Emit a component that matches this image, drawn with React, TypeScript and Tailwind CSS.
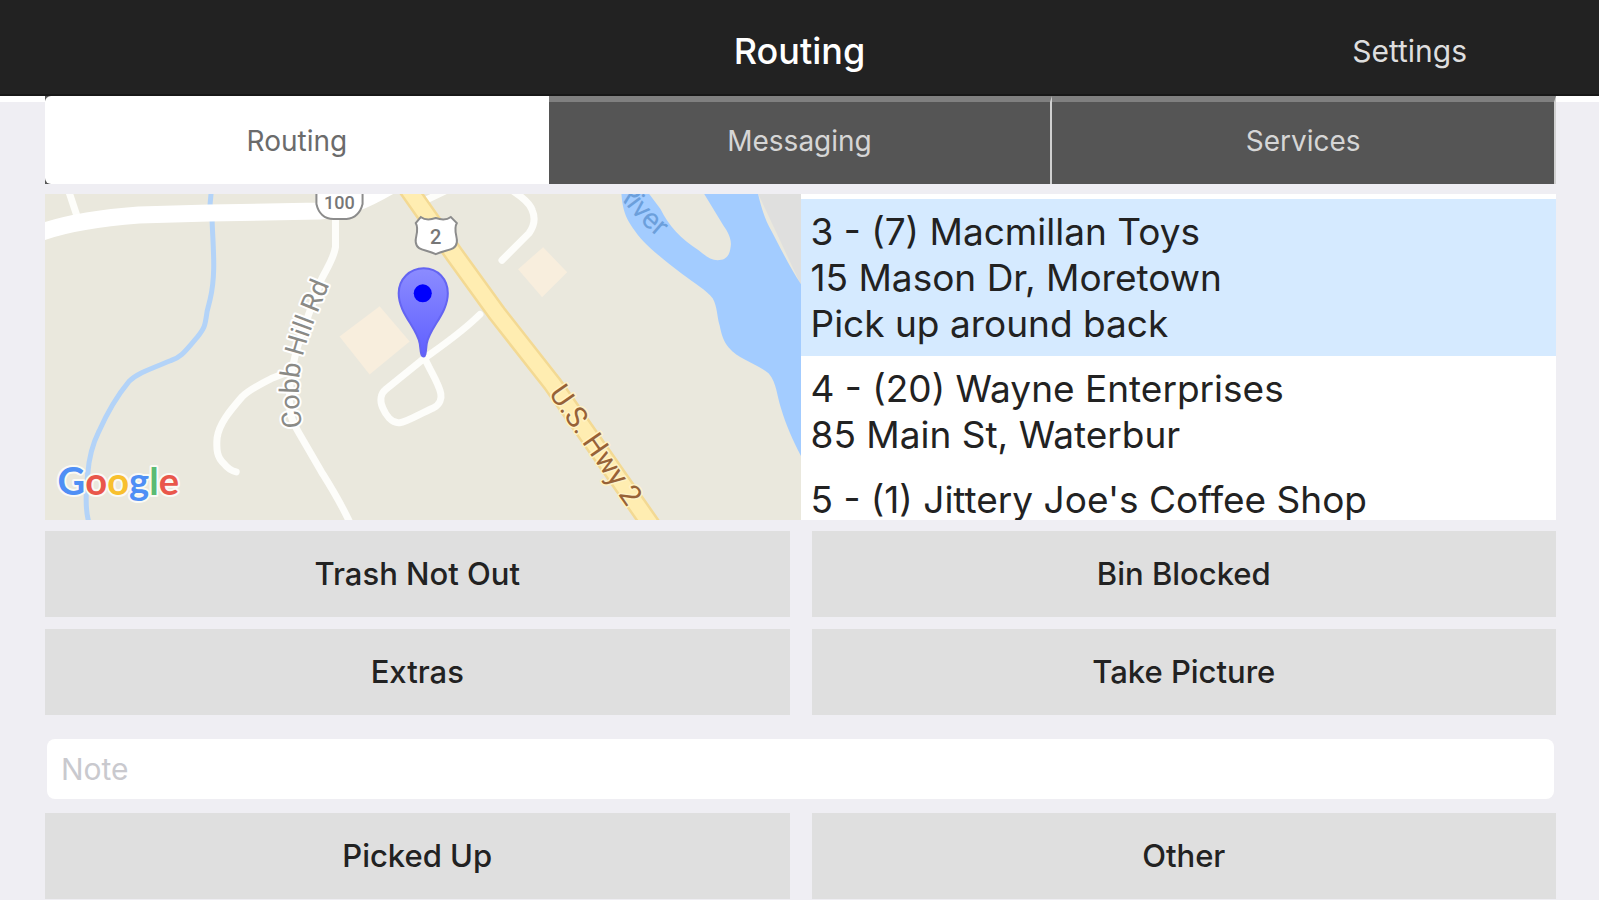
import { useState } from "react";

const tabs = ["Routing", "Messaging", "Services"];

const stops = [
  {
    id: 3,
    lines: ["3 - (7) Macmillan Toys", "15 Mason Dr, Moretown", "Pick up around back"],
  },
  {
    id: 4,
    lines: ["4 - (20) Wayne Enterprises", "85 Main St, Waterbur"],
  },
  {
    id: 5,
    lines: ["5 - (1) Jittery Joe's Coffee Shop"],
  },
];

/* ------------------------------ MAP ------------------------------ */

function RouteMap() {
  return (
    <svg
      viewBox="45 195 756 325"
      preserveAspectRatio="xMidYMid slice"
      className="block h-full w-full bg-[#eae8dd]"
      role="img"
      aria-label="Route map"
    >
      <defs>
        <linearGradient id="pin" x1="0" y1="0" x2="0" y2="1">
          <stop offset="0" stopColor="#8c8cff" />
          <stop offset="1" stopColor="#5f5fff" />
        </linearGradient>
        <path id="cobb-hill" d="M303 427 C299 405 298 385 302 365 C306 340 318 315 336 270" />
        <path id="hwy-2" d="M548 394 L645 534" />
        <path id="river" d="M617 190 C624 208 640 226 680 256" />
      </defs>

      {/* Buildings */}
      <g fill="#f8eedd">
        <path d="M543 248 L567 273 L542 298 L518 270 Z" />
        <path d="M380 307 L410 342 L370 375 L340 337 Z" />
      </g>

      {/* River */}
      <path d="M757 194 H802 V290 Z" fill="#dfdfde" />
      <path
        d="M621 194 C622 208 624 214 628 222 C634 232 640 240 650 249 C660 258 670 266 682 275 C694 284 706 291 712 299 C717 308 716 316 719 326 C721 336 723 342 728 348 C738 360 756 364 768 374 C776 384 776 396 780 408 C786 428 792 440 802 460 V288 C790 270 778 246 768 227 C762 214 760 206 757 194 H703 L723 227 C728 234 731 241 730 247 C729 257 725 261 717 261 C710 261 704 256 698 251 C680 240 668 226 660 210 L648 194 Z"
        fill="#a3ccff"
      />
      <path
        d="M212 194 L211 205 L213 222 C214 250 217 275 211 300 L208 312 C206 326 206 328 198 338 C186 352 182 358 172 361 C150 370 138 374 130 382 C120 394 108 414 100 432 C92 448 90 462 89 474 C87 492 86 508 90 522"
        fill="none"
        stroke="#b3d3f8"
        strokeWidth="5"
      />

      {/* Local roads */}
      <g fill="none" stroke="#fdfdfa" strokeWidth="7" strokeLinecap="round" strokeLinejoin="round">
        <path d="M70 192 L78 216" />
        <path d="M336 215 V248 C334 260 328 268 322 280 L302 335 C294 358 290 380 290 400 C290 416 294 424 300 434 L322 472 C332 488 341 502 351 524" />
        <path d="M290 372 L272 379 C260 385 250 390 243 397 C230 412 220 424 218 438 C217 450 218 458 225 464 C229 469 232 471 237 472" />
        <path d="M480 315 C462 333 444 345 423 360 L386 390 C381 394 380 401 383 408 C386 415 392 424 400 423 C408 422 420 414 434 408 C440 405 442 399 441 394 C439 384 432 374 426 361" />
        <path d="M513 192 C522 198 530 204 532 211 C536 220 534 227 529 234 L502 261" />
        <path d="M420 204 L445 192" />
      </g>
      <path
        d="M38 235 C66 224 100 219 140 216 L210 214 L320 212 C345 210 365 202 392 186"
        fill="none"
        stroke="#fff"
        strokeWidth="17"
      />

      {/* Highway */}
      <g fill="none" strokeLinejoin="round">
        <path d="M405 185 L455 256 L497 314 L552 384 L654 530" stroke="#f3d993" strokeWidth="20" />
        <path d="M405 185 L455 256 L497 314 L552 384 L654 530" stroke="#ffedb1" strokeWidth="15" />
      </g>

      {/* Shields */}
      <path
        d="M317 190 V205 C319 214 325 220 334 220 H347 C356 219 361 213 363 205 V190 Z"
        fill="#fff"
        stroke="#8c8c8c"
        strokeWidth="2"
      />
      <path
        d="M421 218 C425 221 430 221 436 219 C442 221 447 221 451 218 L457 224 C453 231 458 238 457 243 C456 252 446 250 436 255 C426 250 417 252 416 243 C415 238 420 231 416 224 Z"
        fill="#fff"
        stroke="#8c8c8c"
        strokeWidth="2"
      />
      <g className="font-[Roboto,sans-serif] font-medium" fill="#777" textAnchor="middle">
        <text x="340" y="210" fontSize="18">
          100
        </text>
        <text x="436" y="245" fontSize="20">
          2
        </text>
      </g>

      {/* Street names */}
      <g className="font-[Roboto,sans-serif]" fontSize="27" strokeLinejoin="round" paintOrder="stroke">
        <text fill="#8a8a86" stroke="#fff" strokeWidth="4">
          <textPath href="#cobb-hill">Cobb Hill Rd</textPath>
        </text>
        <text fill="#976237" stroke="#fff2c4" strokeWidth="3" fontSize="29">
          <textPath href="#hwy-2">U.S. Hwy 2</textPath>
        </text>
        <text fill="#6c9fdb" fontSize="29">
          <textPath href="#river">River</textPath>
        </text>
      </g>

      {/* Pin */}
      <path
        d="M424 357 C421 357 421 352 420 344 C417 328 399 314 399 294 C399 280 410 269 424 269 C438 269 448 280 448 294 C448 314 430 328 427 344 C426 352 426 357 424 357 Z"
        fill="url(#pin)"
        stroke="#6464f2"
        strokeWidth="2"
      />
      <circle cx="423" cy="294" r="9" fill="#0000fc" />

      <text
        x="59"
        y="495"
        fontSize="38"
        className="font-[Lato,sans-serif] font-bold"
        stroke="#fafaf5"
        strokeWidth="4"
        strokeLinejoin="round"
        paintOrder="stroke"
      >
        <tspan fill="#4f8ff5">G</tspan>
        <tspan fill="#e9574b">o</tspan>
        <tspan fill="#f8c02e">o</tspan>
        <tspan fill="#4f8ff5">g</tspan>
        <tspan fill="#5bbb73">l</tspan>
        <tspan fill="#e9574b">e</tspan>
      </text>
    </svg>
  );
}

/* ------------------------------ ACTIONS ------------------------------ */

function ActionButton({ label }: { label: string }) {
  return (
    <button type="button" className="h-[86px] bg-[#dfdfdf] text-[31px] font-medium text-[#222] cursor-pointer">
      {label}
    </button>
  );
}

/* ------------------------------ MAIN SCREEN ------------------------------ */

export default function App() {
  const [activeTab, setActiveTab] = useState("Routing");
  const [selectedStop, setSelectedStop] = useState(3);
  const [note, setNote] = useState("");

  return (
    <div className="h-screen overflow-hidden bg-[#efeef3] font-[Inter,sans-serif]">
      <header className="grid h-24 grid-cols-3 items-center border-b-2 border-[#181818] bg-[#222] pt-2">
        <h1 className="col-start-2 text-center text-4xl font-medium text-white">
          Routing
        </h1>
        <button type="button" className="mr-[132px] justify-self-end text-3xl text-[#dedede] cursor-pointer">
          Settings
        </button>
      </header>

      <div className="border-t-[6px] border-white">
        <main className="pr-[43px] pl-[45px]">
          {/* Tabs */}
          <nav className="-mt-[6px] grid h-[88px] grid-cols-3 bg-[#555]">
            {tabs.map((tab) => (
              <button
                key={tab}
                type="button"
                onClick={() => setActiveTab(tab)}
                className={`border-t-[6px] pb-1 text-[28px] cursor-pointer ${
                  tab === activeTab
                    ? "rounded-l-md border-white bg-white text-[#6b6b6b]"
                    : "border-r-2 border-t-[#808080] border-r-[#d0d0d0] text-[#d6d6d6]"
                }`}
              >
                {tab}
              </button>
            ))}
          </nav>

          {/* Map and stops */}
          <section className="mt-[10px] grid h-[326px] grid-cols-2">
            <div className="h-full overflow-hidden">
              <RouteMap />
            </div>
            <ul className="h-full overflow-hidden bg-white pt-[5px]">
              {stops.map((stop) => (
                <li key={stop.id}>
                  <button
                    type="button"
                    onClick={() => setSelectedStop(stop.id)}
                    className={`block w-full px-[10px] pt-[10px] pb-[9px] text-left text-[37px] leading-[46px] text-[#222] cursor-pointer ${
                      stop.id === selectedStop ? "bg-[#d5eaff]" : "bg-white"
                    }`}
                  >
                    {stop.lines.map((line) => (
                      <span key={line} className="block whitespace-nowrap">
                        {line}
                      </span>
                    ))}
                  </button>
                </li>
              ))}
            </ul>
          </section>

          <div className="mt-[11px] grid grid-cols-2 gap-x-[22px] gap-y-3">
            <ActionButton label="Trash Not Out" />
            <ActionButton label="Bin Blocked" />
            <ActionButton label="Extras" />
            <ActionButton label="Take Picture" />
          </div>

          <input
            type="text"
            aria-label="Note"
            placeholder="Note"
            value={note}
            onChange={(e) => setNote(e.target.value)}
            className="mx-[2px] mt-6 block h-[60px] w-[calc(100%-4px)] rounded-lg bg-white px-[14px] text-3xl text-[#222] outline-none placeholder:text-[#c9c9ce]"
          />

          <div className="mt-[14px] grid grid-cols-2 gap-x-[22px]">
            <ActionButton label="Picked Up" />
            <ActionButton label="Other" />
          </div>
        </main>
      </div>
    </div>
  );
}
